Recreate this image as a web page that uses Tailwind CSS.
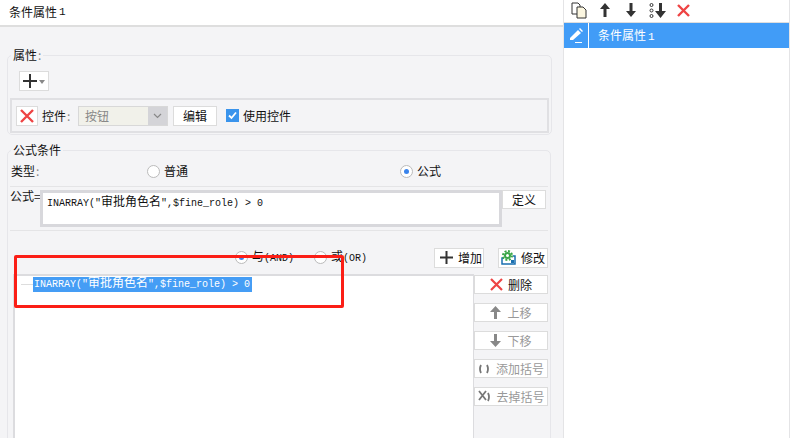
<!DOCTYPE html>
<html lang="en">
<head>
    <meta charset="UTF-8">
    <title>条件属性</title>
    <script src="https://cdn.jsdelivr.net/npm/@tailwindcss/browser@4"></script>
</head>
<body class="bg-white">
    <div class="relative flex h-[438px] w-[799px] overflow-hidden font-['Noto_Sans_CJK_SC','Noto_Sans',sans-serif] text-[12px] leading-[16px] text-[#111]">
        <!-- left -->
        <div class="flex w-[563px] flex-col bg-[#f4f4f6]">
            <div class="flex h-[27px] shrink-0 items-center border-b-2 border-[#dedede] bg-white pb-[2px] pl-[9px]">条件属性<span class="ml-[2px] font-['Liberation_Mono',monospace] text-[11px]">1</span></div>

            <fieldset class="ml-[7px] mt-[20px] h-[88px] w-[544px] shrink-0 rounded-[5px] border border-[#e6e6ea] px-[2px]">
                <legend class="ml-[1px] h-[16px] px-[2px]">属性<span class="ml-[1px] text-[#888]">:</span></legend>
                <button class="ml-[9px] mt-[8px] flex h-[20px] w-[30px] items-center justify-center gap-[2px] border border-[#dcdcdc] bg-white">
                    <svg width="14" height="14" viewBox="0 0 14 14"><path d="M0 7h14M7 0v14" stroke="#333" stroke-width="2"/></svg>
                    <span class="mt-[2px] border-x-[3px] border-t-[4px] border-x-transparent border-t-[#888]"></span>
                </button>
                <div class="mt-[7px] flex h-[35px] w-[539px] items-center border-2 border-[#e0e0e3] pl-[4px]">
                    <button class="flex h-[20px] w-[22px] items-center justify-center border border-[#dcdcdc] bg-white">
                        <svg width="14" height="14" viewBox="0 0 14 14"><path d="M1 1l12 12M13 1L1 13" stroke="#ee4444" stroke-width="2.400"/></svg>
                    </button>
                    <span class="ml-[4px] w-[36px]">控件<span class="ml-[1px] text-[#888]">:</span></span>
                    <div class="flex h-[20px] w-[90px] border border-[#d8d8d8] bg-[#f1f1ea]">
                        <span class="flex-1 pl-[6px] leading-[18px] text-[#888]">按钮</span>
                        <span class="flex w-[19px] items-center justify-center bg-[#d4d4d8]">
                            <svg width="9" height="6" viewBox="0 0 9 6"><path d="M1 1l3.500 3.500L8 1" fill="none" stroke="#888" stroke-width="1.200"/></svg>
                        </span>
                    </div>
                    <button class="ml-[5px] h-[20px] w-[44px] border border-[#dcdcdc] bg-white leading-[18px]">编辑</button>
                    <span class="ml-[9px] flex h-[13px] w-[13px] items-center justify-center bg-[#3a94ec]">
                        <svg width="11" height="11" viewBox="0 0 11 11"><path d="M2 5.500l2.500 2.500L9 2.500" fill="none" stroke="#fff" stroke-width="1.800"/></svg>
                    </span>
                    <span class="ml-[4px]">使用控件</span>
                </div>
            </fieldset>

            <fieldset class="ml-[7px] mt-[7px] h-[320px] w-[544px] shrink-0 rounded-t-[5px] border border-[#e6e6ea]">
                <legend class="ml-[3px] h-[16px] px-[2px]">公式条件</legend>
                <div class="mx-[2px] flex h-[29px] items-center border-b border-[#e4e4e6] pb-[2px]">
                    <span class="ml-[1px] w-[136px]">类型<span class="ml-[1px] text-[#888]">:</span></span>
                    <span class="h-[13px] w-[13px] rounded-full border border-[#bbb] bg-white"></span>
                    <span class="ml-[4px] w-[236px]">普通</span>
                    <span class="flex h-[13px] w-[13px] items-center justify-center rounded-full border border-[#bbb] bg-white">
                        <span class="h-[5px] w-[5px] rounded-full bg-[#3a84ec]"></span>
                    </span>
                    <span class="ml-[4px]">公式</span>
                </div>
                <div class="mx-[2px] mt-[3px] flex h-[41px] border-b border-[#e4e4e6]">
                    <span class="-mt-[2px] w-[30px] whitespace-nowrap">公式=</span>
                    <div class="h-[37px] w-[462px] border-[3px] border-[#d8d8dc] bg-white pl-[4px] pt-[2px] font-['Liberation_Mono','Noto_Sans_CJK_SC',monospace] text-[10px]">INARRAY("<span class="text-[12px]">审批角色名</span>",$fine_role) &gt; 0</div>
                    <button class="h-[19px] w-[44px] border border-[#dcdcdc] bg-white leading-[16px]">定义</button>
                </div>
                <div class="mt-[16px] flex h-[21px] items-center">
                    <span class="ml-[227px] flex h-[13px] w-[13px] items-center justify-center rounded-full border border-[#bbb] bg-white">
                        <span class="h-[5px] w-[5px] rounded-full bg-[#3a84ec]"></span>
                    </span>
                    <span class="ml-[4px] w-[62px]">与<span class="font-['Liberation_Mono',monospace] text-[10px]">(AND)</span></span>
                    <span class="h-[13px] w-[13px] rounded-full border border-[#bbb] bg-white"></span>
                    <span class="ml-[4px] w-[103px]">或<span class="font-['Liberation_Mono',monospace] text-[10px]">(OR)</span></span>
                    <button class="flex h-[20px] w-[50px] items-center gap-[5px] border border-[#dcdcdc] bg-white pl-[5px]">
                        <svg width="13" height="13" viewBox="0 0 13 13"><path d="M0 6.500h13M6.500 0v13" stroke="#333" stroke-width="2"/></svg>增加
                    </button>
                    <button class="ml-[14px] flex h-[20px] w-[50px] items-center gap-[5px] border border-[#dcdcdc] bg-white pl-[2px]">
                        <svg width="15" height="15" viewBox="0 0 15 15"><path d="M3 8H1v6h13V6h-2" fill="none" stroke="#1a6fb0" stroke-width="1.500"/><circle cx="6.500" cy="5.500" r="2.500" fill="none" stroke="#3aa648" stroke-width="2"/><circle cx="6.500" cy="5.500" r="4.500" fill="none" stroke="#3aa648" stroke-width="2" stroke-dasharray="2 1.530"/><rect x="10" y="10" width="3" height="3" fill="#1a6fb0"/></svg>修改
                    </button>
                </div>
                <div class="mt-[6px] flex h-[170px]">
                    <div class="ml-[5px] w-[460px] border-l-2 border-t-2 border-[#dcdcdf] bg-white">
                        <div class="flex items-center pt-[1px]">
                            <span class="ml-[6px] h-px w-[12px] bg-[#ddd]"></span>
                            <span class="bg-[#459df5] pl-[1px] pr-[2px] font-['Liberation_Mono','Noto_Sans_CJK_SC',monospace] text-[10px] leading-[15px] text-white">INARRAY("<span class="text-[12px]">审批角色名</span>",$fine_role) &gt; 0</span>
                        </div>
                    </div>
                    <div class="flex w-[75px] flex-col gap-[9px] border-l border-[#dcdcdf] pt-[1px]">
                        <button class="flex h-[19px] w-[74px] shrink-0 items-center justify-center gap-[5px] border border-[#dcdcdc] bg-white">
                            <svg width="13" height="13" viewBox="0 0 13 13"><path d="M1 1l11 11M12 1L1 12" stroke="#ee4444" stroke-width="2.200"/></svg>删除
                        </button>
                        <button class="flex h-[19px] w-[74px] shrink-0 items-center justify-center gap-[6px] border border-[#dcdcdc] bg-white text-[#999]">
                            <svg width="11" height="13" viewBox="0 0 11 13"><path d="M5.500 0L11 6H7v7H4V6H0z" fill="#888"/></svg>上移
                        </button>
                        <button class="flex h-[19px] w-[74px] shrink-0 items-center justify-center gap-[6px] border border-[#dcdcdc] bg-white text-[#999]">
                            <svg width="11" height="13" viewBox="0 0 11 13"><path d="M5.500 13L11 7H7V0H4v7H0z" fill="#888"/></svg>下移
                        </button>
                        <button class="flex h-[19px] w-[74px] shrink-0 items-center justify-center gap-[6px] border border-[#dcdcdc] bg-white text-[#999]">
                            <svg width="12" height="10" viewBox="0 0 12 10"><path d="M3 1Q1 5 3 9M9 1q2 4 0 8" fill="none" stroke="#777" stroke-width="1.800"/></svg>添加括号
                        </button>
                        <button class="flex h-[19px] w-[74px] shrink-0 items-center justify-center gap-[5px] border border-[#dcdcdc] bg-white text-[#999]">
                            <svg width="14" height="13" viewBox="0 0 14 13"><path d="M2 1l7 9M9 1l-7 9M11 3q2 4 0 8" fill="none" stroke="#777" stroke-width="1.800"/></svg>去掉括号
                        </button>
                    </div>
                </div>
            </fieldset>
        </div>

        <!-- right -->
        <div class="flex w-[227px] flex-col border-x border-[#e4e4e6] bg-white">
            <div class="flex h-[23px] items-center border-b border-[#dedede] pb-[2px] pl-[7px]">
                <svg width="16" height="17" viewBox="0 0 16 17"><path d="M1 1h6l2 2v9H1z" fill="#fff" stroke="#333"/><path d="M6 5h6l3 3v8H6z" fill="#fbf6e0" stroke="#333"/></svg>
                <svg width="10" height="14" class="ml-[13px]" viewBox="0 0 10 14"><path d="M5 0l5 6H6.500v8h-3V6H0z" fill="#333"/></svg>
                <svg width="10" height="14" class="ml-[16px]" viewBox="0 0 10 14"><path d="M5 14l5-6H6.500V0h-3v8H0z" fill="#333"/></svg>
                <svg width="17" height="15" class="ml-[13px]" viewBox="0 0 17 15"><circle cx="2.500" cy="2" r="1.500" fill="none" stroke="#333"/><circle cx="2.500" cy="7.500" r="1.500" fill="none" stroke="#333"/><circle cx="2.500" cy="13" r="1.500" fill="none" stroke="#333"/><path d="M11.500 15l5.500-7h-4V0H10v8H6z" fill="#333"/></svg>
                <svg width="13" height="13" class="ml-[11px]" viewBox="0 0 13 13"><path d="M1 1l11 11M12 1L1 12" stroke="#ee4444" stroke-width="2.400"/></svg>
            </div>
            <div class="flex h-[25px] bg-[#419cf7] text-white">
                <div class="flex w-[25px] items-center justify-center border-r border-white">
                    <svg width="15" height="15" viewBox="0 0 15 15"><path d="M1 10L9 2l3 3-8 7H1zM10 1l1-1 3 3-1 1z" fill="#fff"/><path d="M6 14.500h7" stroke="#fff"/></svg>
                </div>
                <span class="pl-[9px] leading-[24px]">条件属性<span class="ml-[2px] font-['Liberation_Mono',monospace] text-[11px]">1</span></span>
            </div>
        </div>

        <!-- red annotation -->
        <div class="absolute left-[14px] top-[255px] h-[53px] w-[330px] rounded-[2px] border-[3px] border-[#fb1e16]"></div>
    </div>
</body>
</html>
